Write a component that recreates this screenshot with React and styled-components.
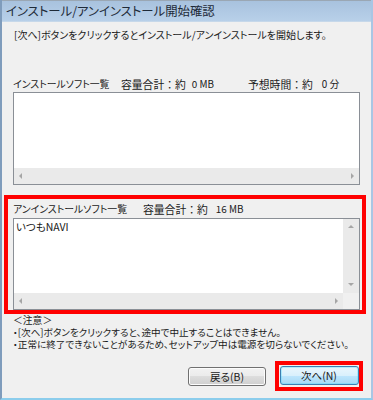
import React from "react";
import styled, { createGlobalStyle, css } from "styled-components";

const Global = createGlobalStyle`
  html, body { margin: 0; padding: 0; background: #f0f0f0; }
  body { font-family: "Noto Sans CJK JP", "Noto Sans", sans-serif; }
`;

const Window = styled.div`
  width: 373px;
  height: 400px;
  box-sizing: border-box;
  display: flex;
  flex-direction: column;
  background: #f0f0f0;
  border-left: 2px solid #7f9cbc;
  border-right: 2px solid #a9c6e4;
  border-bottom: 2px solid #8ccdec;
  overflow: hidden;
  font-family: "Noto Sans CJK JP", sans-serif;
  font-feature-settings: "palt";
  color: #1a1a1a;
`;

const TitleBar = styled.div`
  height: 22px;
  flex: none;
  box-sizing: border-box;
  border-top: 1px solid #9aa7b4;
  background: linear-gradient(#a8c2de, #b8d0e9);
  border-bottom: 1px solid #c6d8ea;
  display: flex;
  align-items: center;
  padding-left: 4px;
  font-size: 12.4px;
  color: #1e2a38;
`;

const Text = styled.div`
  font-size: ${(p) => p.$fs ?? 10}px;
  line-height: 12px;
  height: 12px;
  white-space: nowrap;
  margin-left: ${(p) => p.$ml ?? 11}px;
  margin-top: ${(p) => p.$mt ?? 0}px;
`;

const LabelRow = styled.div`
  display: flex;
  font-size: 9.9px;
  line-height: 12px;
  height: 12px;
  white-space: nowrap;
  margin-left: ${(p) => p.$ml}px;
  margin-top: ${(p) => p.$mt ?? 0}px;
`;

const Cell = styled.span`
  width: ${(p) => p.$w}px;
  flex: none;
  display: flex;
  gap: ${(p) => p.$gap ?? 0}px;
`;

const Stat = styled.span`
  font-feature-settings: normal;
  font-size: 10.8px;
`;

const ListBox = styled.div`
  box-sizing: border-box;
  height: ${(p) => p.$h}px;
  margin: ${(p) => p.$m};
  border: 1px solid #8a8f96;
  background: #fff;
  display: grid;
  grid-template-columns: ${(p) => (p.$vscroll ? "1fr 16px" : "1fr")};
  grid-template-rows: 1fr 16px;
`;

const ListContent = styled.div`
  font-size: 10.5px;
  line-height: 12px;
  padding: 2px 0 0 2px;
  white-space: nowrap;
`;

const HScroll = styled.div`
  background: #eaeaea;
  display: flex;
  justify-content: space-between;
  align-items: center;
  padding: 0 5px;
`;

const VScroll = styled.div`
  background: #eaeaea;
  display: flex;
  flex-direction: column;
  justify-content: space-between;
  align-items: center;
  padding: 6px 0 7px;
`;

const Corner = styled.div`
  background: #f0f0f0;
`;

const Arrow = styled.span`
  width: 0;
  height: 0;
  ${(p) =>
    p.$dir === "left" &&
    css`
      border-top: 3px solid transparent;
      border-bottom: 3px solid transparent;
      border-right: 3px solid #a6a6a6;
    `}
  ${(p) =>
    p.$dir === "right" &&
    css`
      border-top: 3px solid transparent;
      border-bottom: 3px solid transparent;
      border-left: 3px solid #a6a6a6;
    `}
  ${(p) =>
    p.$dir === "up" &&
    css`
      border-left: 3px solid transparent;
      border-right: 3px solid transparent;
      border-bottom: 3px solid #a6a6a6;
    `}
  ${(p) =>
    p.$dir === "down" &&
    css`
      border-left: 3px solid transparent;
      border-right: 3px solid transparent;
      border-top: 3px solid #a6a6a6;
    `}
`;

const Highlight = styled.div`
  box-sizing: border-box;
  border: 4px solid #ff0000;
  margin: ${(p) => p.$m};
  padding: ${(p) => p.$p};
  display: flex;
  flex-direction: column;
`;

const ButtonRow = styled.div`
  display: flex;
  justify-content: flex-end;
  align-items: center;
  margin-top: 11px;
  margin-right: 8px;
  gap: 9px;
`;

const Button = styled.button`
  box-sizing: border-box;
  width: ${(p) => p.$w}px;
  height: 19px;
  margin: 0;
  padding: 0;
  border-radius: 3px;
  font-family: "Noto Sans CJK JP", sans-serif;
  font-feature-settings: "palt";
  font-size: 10.5px;
  color: #1a1a1a;
  border: 1px solid ${(p) => (p.$primary ? "#3c7fb1" : "#707070")};
  box-shadow: inset 0 0 0 1px ${(p) => (p.$primary ? "#48d8fb55" : "#fcfcfc")};
  background: ${(p) =>
    p.$primary
      ? "linear-gradient(#eaf6fd 0%, #d9f0fc 50%, #bee6fd 50%, #a7d9f5 100%)"
      : "linear-gradient(#f2f2f2 0%, #ebebeb 50%, #dddddd 50%, #cfcfcf 100%)"};
`;

const ButtonHighlight = styled.div`
  border: 4px solid #ff0000;
  padding: 0 0 1px 0;
  display: flex;
  justify-content: center;
  width: 80px;
  height: 21px;
  align-items: center;
  box-sizing: content-box;
`;

export default function App() {
  return (
    <>
      <Global />
      <Window>
        <TitleBar>インストール/アンインストール開始確認</TitleBar>
        <Text $ml={12} $mt={7}>
          [次へ]ボタンをクリックするとインストール/アンインストールを開始します。
        </Text>
        <LabelRow $ml={11} $mt={37}>
          <Cell $w={108}>インストールソフト一覧</Cell>
          <Cell $w={127} $gap={6}>
            <Stat>容量合計：約</Stat>
            <span>0 MB</span>
          </Cell>
          <Cell $w={100} $gap={9}>
            <Stat>予想時間：約</Stat>
            <span>0 分</span>
          </Cell>
        </LabelRow>
        <ListBox $h={93} $m="2px 11px 0 11px">
          <ListContent />
          <HScroll>
            <Arrow $dir="left" />
            <Arrow $dir="right" />
          </HScroll>
        </ListBox>
        <Highlight $m="10px 5px 0 2px" $p="4px 2px 0 5px">
          <LabelRow $ml={0}>
            <Cell $w={130}>アンインストールソフト一覧</Cell>
            <Cell $w={120} $gap={8}>
              <Stat>容量合計：約</Stat>
              <span>16 MB</span>
            </Cell>
          </LabelRow>
          <ListBox $h={92} $m="3px 0 0 0" $vscroll>
            <ListContent>いつもNAVI</ListContent>
            <VScroll>
              <Arrow $dir="up" />
              <Arrow $dir="down" />
            </VScroll>
            <HScroll>
              <Arrow $dir="left" />
              <Arrow $dir="right" />
            </HScroll>
            <Corner />
          </ListBox>
        </Highlight>
        <Text $ml={11} $fs={9.8}>＜注意＞</Text>
        <Text $ml={11} $fs={9.6}>・[次へ]ボタンをクリックすると、途中で中止することはできません。</Text>
        <Text $ml={11} $fs={9.6}>・正常に終了できないことがあるため、セットアップ中は電源を切らないでください。</Text>
        <ButtonRow>
          <Button $w={78}>戻る(B)</Button>
          <ButtonHighlight>
            <Button $w={79} $primary>次へ(N)</Button>
          </ButtonHighlight>
        </ButtonRow>
      </Window>
    </>
  );
}
